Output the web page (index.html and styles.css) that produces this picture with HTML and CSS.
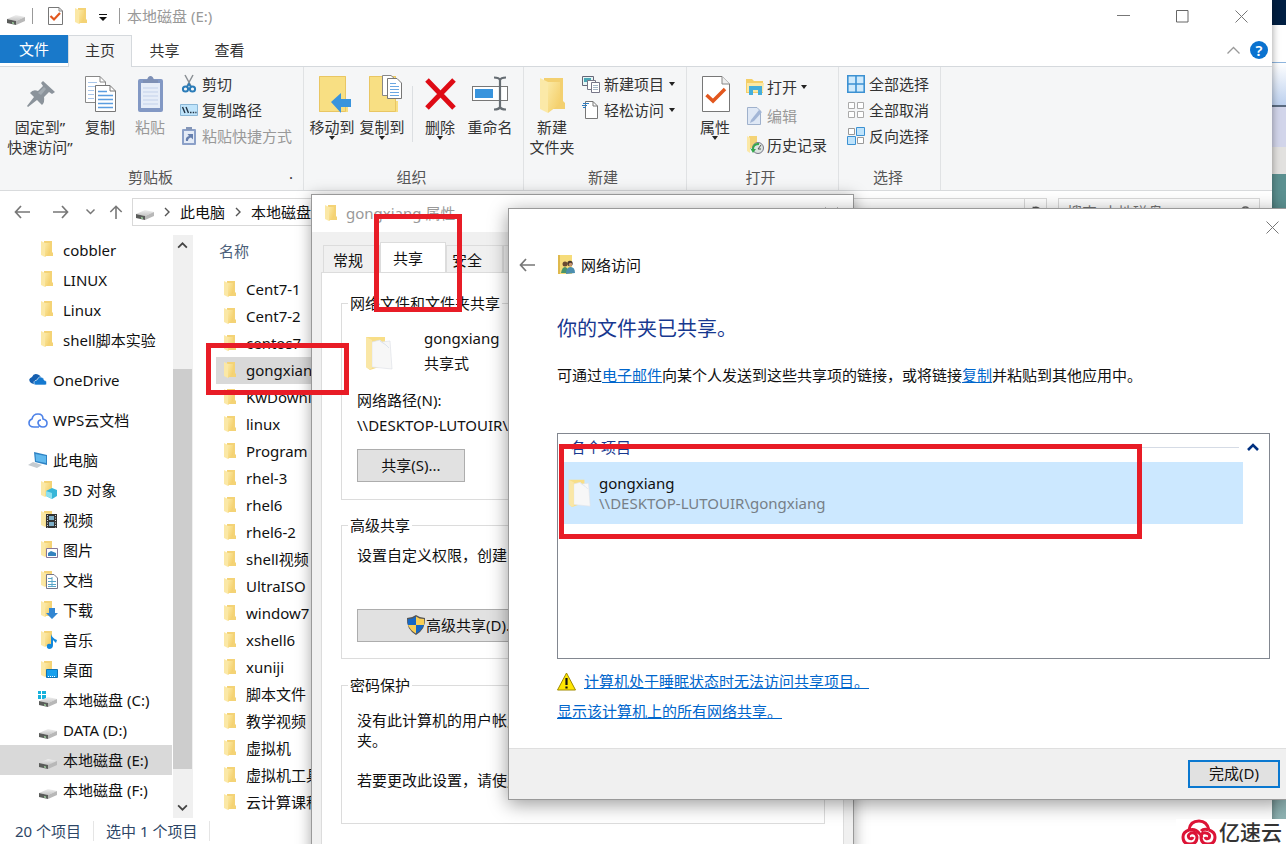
FILE: index.html
```html
<!DOCTYPE html>
<html lang="zh-CN">
<head>
<meta charset="utf-8">
<title>本地磁盘 (E:)</title>
<link rel="stylesheet" href="styles.css">
</head>
<body>
<svg class="defs" aria-hidden="true">
  <defs>
    <linearGradient id="gold" x1="0" x2="1" y1="0" y2="1"><stop offset="0" stop-color="#fbe9a4"/><stop offset="1" stop-color="#f3cb62"/></linearGradient>
    <linearGradient id="steel" x1="0" x2="0" y1="0" y2="1"><stop offset="0" stop-color="#f0f0f0"/><stop offset="1" stop-color="#c4c4c4"/></linearGradient>
  </defs>
  <symbol id="folder" viewBox="0 0 12 16"><path d="M3 0H11V11L12 12V15H3Z" fill="#f4d376"/><path d="M0 0L4 2V16L0 14Z" fill="#fbe8a6"/><path d="M4 2H9V12L4 16Z" fill="url(#gold)"/></symbol>
  <symbol id="drive" viewBox="0 0 18 12"><path d="M0 6L9 2L18 4L9 8Z" fill="url(#steel)"/><path d="M0 6L9 8V12L0 10Z" fill="#5a5c5a"/><path d="M9 8L18 4V8L9 12Z" fill="#b8b8b8"/><path d="M5 9L7 9.500V11L5 10.500Z" fill="#9acb9a"/></symbol>
  <symbol id="check-doc" viewBox="0 0 28 36"><path d="M.5.500H20L27.500 8V35.500H.5Z" fill="#fff" stroke="#777"/><path d="M20 .5V8H27.500" fill="#eee" stroke="#888"/><path d="M4.500 19L11 25L23 13" fill="none" stroke="#e2571e" stroke-width="3.500"/></symbol>
  <symbol id="open-folder" viewBox="0 0 28 34"><path d="M1 1H20V29L5 34L1 31Z" fill="#f8de87"/><path d="M7 6L15 4L17 6L25 5L27 33L7 31Z" fill="#f7f7f7" stroke="#e0e3e8" stroke-width=".7"/><path d="M15 5L21 9L24 12" fill="none" stroke="#dce3ed"/><path d="M1 1L7 4V32L5 34L1 31Z" fill="#fae7a6"/></symbol>
  <symbol id="chev-r" viewBox="0 0 6 10"><path d="M1 1L5 5L1 9" fill="none" stroke="#555" stroke-width="1.400"/></symbol>
  <symbol id="caret" viewBox="0 0 6 4"><path d="M0 0H6L3 4Z" fill="#222"/></symbol>
  <symbol id="left" viewBox="0 0 16 14"><path d="M16 7H1.500M7 1L1.500 7L7 13" fill="none" stroke="#777" stroke-width="1.700"/></symbol>
  <symbol id="close" viewBox="0 0 13 13"><path d="M.5.500L12.500 12.500M12.500.5L.5 12.500" stroke="#777" fill="none"/></symbol>
</svg>

<div class="desktop">
  <div class="backdrop"><i class="navy"></i><i class="white"></i><i class="sky"></i><i class="lilac"></i><i class="sand"></i><i class="teal"></i></div>

  <main class="explorer">
    <header class="titlebar">
      <svg class="drive"><use href="#drive"/></svg><span class="bar"></span>
      <svg class="q-check" viewBox="0 0 15 18"><path d="M.5.500H11L14.500 4V17.500H.5Z" fill="#fff" stroke="#777"/><path d="M11 .5V4H14.500" fill="none" stroke="#888"/><path d="M2.500 9L6 12.500L12 6" fill="none" stroke="#e2571e" stroke-width="2.200"/></svg>
      <svg class="folder"><use href="#folder"/></svg>
      <svg class="q-menu" viewBox="0 0 8 7"><path d="M0 0H8V1H0ZM0 3H8L4 7Z" fill="#111"/></svg>
      <span class="bar"></span><span class="title">本地磁盘 (E:)</span>
      <div class="win-controls">
        <button aria-label="最小化"><svg viewBox="0 0 13 13"><path d="M0 5.500H13" stroke="#777"/></svg></button>
        <button aria-label="最大化"><svg viewBox="0 0 13 13"><path d="M.5.500H12V12H.5Z" fill="none" stroke="#666"/></svg></button>
        <button aria-label="关闭"><svg><use href="#close"/></svg></button>
      </div>
    </header>

    <nav class="tabs">
      <button class="file">文件</button><button class="on">主页</button><button>共享</button><button>查看</button>
      <div class="tab-tools">
        <svg class="fold" viewBox="0 0 13 8"><path d="M.5 7.500L6.500 1.500L12.500 7.500" fill="none" stroke="#999" stroke-width="1.300"/></svg>
        <button class="help" aria-label="帮助">?</button>
      </div>
    </nav>

    <section class="ribbon">
      <div class="group clip">
        <div class="tools">
          <button class="big wide"><svg class="art" viewBox="0 0 32 38"><path d="M19 6L31 17L28 19L25 17L20 22Q21 27 18 30L13 25L4 32L3 31L10 22L6 18Q9 14 14 16L19 11L17 8Z" fill="#8b939b"/><path d="M14 18L20 12L22 14L17 20Z" fill="#a3abb2"/></svg><span>固定到”<br>快速访问”</span></button>
          <button class="big"><svg class="art" viewBox="0 0 32 38"><path d="M1.500 1.500H16L21.500 7V27.500H1.500Z" fill="#fff" stroke="#888"/><path d="M16 1.500V7H21.500" fill="none" stroke="#888"/><path d="M4 7.500H13M4 11.500H19M4 15.500H10M4 19.500H10M4 23.500H10" stroke="#a9c6ea"/><path d="M11.500 10.500H26L31.500 16V36.500H11.500Z" fill="#fff" stroke="#777"/><path d="M26 10.500V16H31.500" fill="none" stroke="#777"/><path d="M14 16.500H23M14 20.500H29M14 24.500H29M14 28.500H29M14 32.500H29" stroke="#5b9de0" stroke-width="1.300"/></svg><span>复制</span></button>
          <button class="big off"><svg class="art" viewBox="0 0 32 38"><rect x="4" y="4" width="25" height="33" rx="2" fill="#8298c4"/><rect x="7" y="8" width="19" height="25" fill="#e6edf8"/><path d="M9 8V5H13Q14 1 16.500 1Q19 1 20 5H24V8Z" fill="#7e90b5"/><path d="M9 13H24M9 17H24M9 21H24M9 25H24M9 29H24" stroke="#c3d1ea"/></svg><span>粘贴</span></button>
          <ul class="small">
            <li><button><svg viewBox="0 0 18 18"><path d="M5 0L11 11M13 0L7 11" stroke="#8a8f94" stroke-width="1.500"/><circle cx="5.500" cy="14" r="2.600" fill="none" stroke="#2b7cb8" stroke-width="2"/><circle cx="12.500" cy="14" r="2.600" fill="none" stroke="#2b7cb8" stroke-width="2"/><path d="M7 12L9 9L11 12" stroke="#2b7cb8" stroke-width="1.600" fill="none"/></svg>剪切</button></li>
            <li><button><svg viewBox="0 0 18 18"><path d="M.5 3.500H17.500V14.500H.5Z" fill="#bfe4fb" stroke="#8ab6d6"/><path d="M2.500 6L5 12M6 6L8.500 12M10 11.500H11.500M12.700 11.500H14.200M15.300 11.500H16.500" stroke="#234" stroke-width="1.400"/></svg>复制路径</button></li>
            <li><button class="off"><svg viewBox="0 0 18 18"><rect x="2" y="2" width="14" height="16" rx="1" fill="#8ba0c8"/><rect x="4" y="4" width="10" height="12" fill="#e4ebf6"/><path d="M6 0H12V3H6Z" fill="#8496b8"/><path d="M6 14Q5 10 9 9L7.500 7H13V12.500L11 10.500Q8 11 8 14Z" fill="#667fae"/></svg>粘贴快捷方式</button></li>
          </ul>
        </div>
        <h2>剪贴板</h2><span class="launcher">.</span>
      </div>

      <div class="group org">
        <div class="tools">
          <button class="big"><svg class="art" viewBox="-3 0 32 38"><path d="M0 1H27V26H29V37H0Z" fill="#f8df83"/><path d="M.5 1.500H26.500V36.500H.5Z" fill="none" stroke="#e9c663"/><path d="M12 27L22 18V24H32V32H22V38Z" fill="#3994dd"/></svg><span>移动到</span><svg class="caret"><use href="#caret"/></svg></button>
          <button class="big"><svg class="art" viewBox="0 0 32 38"><path d="M3 1H30V26H32V37H3Z" fill="#f8df83"/><path d="M3.500 1.500H29.500V36.500H3.500Z" fill="none" stroke="#e9c663"/><path d="M16.500.500H25L29 4V20.500H16.500Z" fill="#fff" stroke="#888"/><path d="M21.500 3.500H31L35.500 8V23.500H21.500Z" fill="#fff" stroke="#777"/><path d="M24 8.500H30M24 11.500H33M24 14.500H33M24 17.500H33M24 20.500H33" stroke="#6ba7e2"/></svg><span>复制到</span><svg class="caret"><use href="#caret"/></svg></button>
          <span class="split"></span>
          <button class="big"><svg class="art" viewBox="0 0 32 38"><path d="M3 5L30 33M30 5L3 33" stroke="#de0b15" stroke-width="5"/></svg><span>删除</span><svg class="caret"><use href="#caret"/></svg></button>
          <button class="big"><svg class="art name-art" viewBox="0 0 36 38"><rect x=".5" y="11.500" width="35" height="14" fill="#fff" stroke="#777"/><rect x="3" y="14" width="18" height="9" fill="#3994dd"/><path d="M22 2.500Q27 2.500 28 5Q29 2.500 34 2.500M28 5V32M22 34.500Q27 34.500 28 32Q29 34.500 34 34.500" fill="none" stroke="#666d73" stroke-width="2.200"/></svg><span>重命名</span></button>
        </div>
        <h2>组织</h2>
      </div>

      <div class="group new">
        <div class="tools">
          <button class="big"><svg class="art" viewBox="0 0 32 38"><path d="M8 3H27V26L29 28V34H8Z" fill="#f3d070"/><path d="M4 3L12 7V38L4 34Z" fill="#fbe9a8"/><path d="M12 7H24V29L12 38Z" fill="url(#gold)"/></svg><span>新建<br>文件夹</span></button>
          <ul class="small">
            <li><button><svg viewBox="0 0 18 18"><path d="M.5 1.500H11.500V10.500H.5Z" fill="#e5f5f5" stroke="#667"/><path d="M2 5H9" stroke="#4aa7b5" stroke-width="4"/><path d="M5.500 5.500H13.500V14.500H5.500Z" fill="#fff" stroke="#778"/><path d="M9.500 7.500H17.500V17.500H9.500Z" fill="#fff" stroke="#778"/><path d="M11 10.500H16M11 12.500H16M11 14.500H16" stroke="#a3b4c4"/></svg>新建项目<svg class="caret"><use href="#caret"/></svg></button></li>
            <li><button><svg viewBox="0 0 18 18"><path d="M3.500.500H11L15.500 5V17.500H3.500Z" fill="#fff" stroke="#777"/><path d="M11 .5V5H15.500" fill="none" stroke="#777"/><path d="M1 2.500H7M0 4.500H5M1 6.500H4" stroke="#2c7bbf" stroke-width="1.200"/></svg>轻松访问<svg class="caret"><use href="#caret"/></svg></button></li>
          </ul>
        </div>
        <h2>新建</h2>
      </div>

      <div class="group open">
        <div class="tools">
          <button class="big"><svg class="art" viewBox="-3 -1 32 38"><use href="#check-doc" width="28" height="36"/></svg><span>属性</span><svg class="caret"><use href="#caret"/></svg></button>
          <ul class="small tall">
            <li><button><svg viewBox="0 0 18 18"><path d="M0 1H6L8 3H17V15H0Z" fill="#f5cf67"/><path d="M1 5H18L17 14H1Z" fill="#fce9a4"/><path d="M3 17V8H16V17H12V12H7V17Z" fill="#45aedb"/></svg>打开<svg class="caret"><use href="#caret"/></svg></button></li>
            <li><button class="off"><svg viewBox="0 0 18 18"><path d="M1.500.500H11L14.500 4V17.500H1.500Z" fill="#dfe8f5" stroke="#9fb1cc"/><path d="M5 13L13 3L16 5L8 14L4 16Z" fill="#a3b6d6"/></svg>编辑</button></li>
            <li><button><svg viewBox="0 0 18 18"><path d="M3 0H11V12H3Z" fill="#f4d376"/><path d="M1 0L4 2V17L1 15Z" fill="#fbe8a6"/><circle cx="12" cy="12" r="5.500" fill="#dce4e0" stroke="#778"/><path d="M12 13L15 9M12 13H15" stroke="#555" fill="none"/><path d="M13 7Q7 6 6 13L4 12L7 17L10 13H8Q8 9 13 9Z" fill="#35a64c"/></svg>历史记录</button></li>
          </ul>
        </div>
        <h2>打开</h2>
      </div>

      <div class="group select">
        <div class="tools">
          <ul class="small">
            <li><button><svg viewBox="0 0 18 18"><path d="M.8.800H17.200V17.200H.8ZM9 1V17M1 9H17" fill="#cfeafc" stroke="#3c91d2" stroke-width="1.600"/></svg>全部选择</button></li>
            <li><button><svg viewBox="0 0 18 18"><path d="M1.500 1.500H7.500V7.500H1.500ZM10.500 1.500H16.500V7.500H10.500ZM1.500 10.500H7.500V16.500H1.500ZM10.500 10.500H16.500V16.500H10.500Z" fill="#fff" stroke="#aaa"/></svg>全部取消</button></li>
            <li><button><svg viewBox="0 0 18 18"><path d="M1.500 1.500H7.500V7.500H1.500ZM10.500 10.500H16.500V16.500H10.500Z" fill="#fff" stroke="#999"/><path d="M9.500.500H17.500V8.500H9.500ZM.5 9.500H8.500V17.500H.5Z" fill="#bfe3fb" stroke="#3c91d2"/></svg>反向选择</button></li>
          </ul>
        </div>
        <h2>选择</h2>
      </div>
    </section>

    <section class="address">
      <svg class="arrow"><use href="#left"/></svg>
      <svg class="arrow fwd" viewBox="0 0 16 14"><path d="M0 7H14.500M9 1L14.500 7L9 13" fill="none" stroke="#777" stroke-width="1.700"/></svg>
      <svg class="down" viewBox="0 0 9 6"><path d="M.5.500L4.500 4.500L8.500.5" fill="none" stroke="#777" stroke-width="1.500"/></svg>
      <svg class="arrow" viewBox="0 0 16 16"><path d="M8 16V1.500M1.500 8L8 1.500L14.500 8" fill="none" stroke="#777" stroke-width="1.800"/></svg>
      <div class="path">
        <svg class="drive"><use href="#drive"/></svg><svg class="chev"><use href="#chev-r"/></svg><a href="#pc">此电脑</a><svg class="chev"><use href="#chev-r"/></svg><a href="#e">本地磁盘 (E:)</a>
        <button class="refresh" aria-label="刷新"><svg viewBox="0 0 14 14"><path d="M11 3A5.500 5.500 0 1 0 12.500 8M3 1.500H7V5" fill="none" stroke="#555" stroke-width="1.500"/></svg></button>
      </div>
      <div class="search"><input type="search" aria-label="搜索" placeholder="搜索&quot;本地磁盘 (E:)&quot;"><svg viewBox="0 0 14 14"><circle cx="8" cy="5.500" r="4.500" fill="none" stroke="#666" stroke-width="1.500"/><path d="M5 9L1 13" stroke="#666" stroke-width="1.500"/></svg></div>
    </section>

    <section class="body">
      <nav class="tree">
        <a href="#n1"><svg class="ico"><use href="#folder" width="12" height="16"/></svg>cobbler</a>
        <a href="#n2"><svg class="ico"><use href="#folder" width="12" height="16"/></svg>LINUX</a>
        <a href="#n3"><svg class="ico"><use href="#folder" width="12" height="16"/></svg>Linux</a>
        <a href="#n4"><svg class="ico"><use href="#folder" width="12" height="16"/></svg>shell脚本实验</a>
        <a class="root" href="#n5"><svg class="ico" viewBox="0 0 20 18"><path d="M3 12Q-1 8 4 6Q6 1 11 4Q13 5 13 7L8 14Z" fill="#155fb0"/><path d="M7 14Q4 10 9 9Q11 4 15 7Q16 7 16 9Q20 10 18 14Z" fill="#1479d0" stroke="#fff" stroke-width=".6"/></svg>OneDrive</a>
        <a class="root" href="#n6"><svg class="ico" viewBox="0 0 20 18"><path d="M6 16Q1 16 1 12Q1 9 4 8Q5 3 10 3Q15 3 15 8Q19 9 19 12Q19 16 15 16Q11 16 10 12Q10 9 13 9M6 16H11" fill="none" stroke="#4d82e8" stroke-width="1.600"/></svg>WPS云文档</a>
        <a class="root" href="#n7"><svg class="ico" viewBox="0 0 20 18"><path d="M6 1L19 4V14L7 11Z" fill="#2f83c4"/><path d="M7.500 3L18 5V12L8 10Z" fill="#61b9ee"/><path d="M0 14L5 11L14 14L9 17Z" fill="#c5cbd0"/></svg>此电脑</a>
        <a href="#n8"><svg class="ico" viewBox="0 0 17 18"><use href="#folder" width="12" height="16"/><path d="M5 10L11 7L16 9V15L11 18L5 15Z" fill="#38b6d8"/><path d="M5 10L11 12V18L5 15Z" fill="#8de0ef"/></svg>3D 对象</a>
        <a href="#n9"><svg class="ico" viewBox="0 0 17 18"><use href="#folder" width="12" height="16"/><rect x="5" y="3" width="11" height="14" fill="#333"/><path d="M8 5H13V9H8ZM8 11H13V15H8Z" fill="#7eb0c9"/><path d="M6.500 4V17M14.500 4V17" stroke="#ddd" stroke-dasharray="1 1.500"/></svg>视频</a>
        <a href="#n10"><svg class="ico" viewBox="0 0 17 18"><use href="#folder" width="12" height="16"/><path d="M5.500 7.500H16.500V16.500H5.500Z" fill="#fff" stroke="#879"/><path d="M7 12L10 10L15 12V15H7Z" fill="#3583bf"/></svg>图片</a>
        <a href="#n11"><svg class="ico" viewBox="0 0 17 18"><use href="#folder" width="12" height="16"/><path d="M5.500 3.500H13L16.500 7V17.500H5.500Z" fill="#fff" stroke="#778"/><path d="M7 7.500H11M7 10.500H15M7 13.500H15M7 15.500H15M11 6V15" stroke="#59a5c8"/></svg>文档</a>
        <a href="#n12"><svg class="ico" viewBox="0 0 17 18"><use href="#folder" width="12" height="16"/><path d="M8 7H14V12H17L11 18L5 12H8Z" fill="#3286d2"/></svg>下载</a>
        <a href="#n13"><svg class="ico" viewBox="0 0 17 18"><use href="#folder" width="12" height="16"/><path d="M10 3Q11 7 16 9L15 12L12 9V14Q12 18 8 18Q5 17 6 14Q7 12 10 13Z" fill="#1388dc"/></svg>音乐</a>
        <a href="#n14"><svg class="ico" viewBox="0 0 17 18"><use href="#folder" width="12" height="16"/><path d="M5.500 8.500H16.500V16.500H5.500Z" fill="#16a0ee" stroke="#1273b3"/><path d="M7 15.500H15" stroke="#fff" stroke-dasharray="1 1"/></svg>桌面</a>
        <a href="#c"><svg class="ico disk" viewBox="0 0 20 18"><path d="M0 0H3V3H0ZM4 0H8V3H4ZM0 4H3V8H0ZM4 4H8V8H4Z" fill="#16b1dc"/><use href="#drive" x="1" y="4" width="18" height="12"/></svg>本地磁盘 (C:)</a>
        <a href="#d"><svg class="ico disk" viewBox="0 0 20 18"><use href="#drive" x="1" y="6" width="18" height="12"/></svg>DATA (D:)</a>
        <a class="sel" href="#e"><svg class="ico disk" viewBox="0 0 20 18"><use href="#drive" x="1" y="6" width="18" height="12"/></svg>本地磁盘 (E:)</a>
        <a href="#f"><svg class="ico disk" viewBox="0 0 20 18"><use href="#drive" x="1" y="6" width="18" height="12"/></svg>本地磁盘 (F:)</a>
      </nav>
      <div class="scroll">
        <svg viewBox="0 0 12 8"><path d="M1 6.500L6 1.500L11 6.500" fill="none" stroke="#444" stroke-width="2"/></svg>
        <span class="thumb"></span>
        <svg class="end" viewBox="0 0 12 8"><path d="M1 1.500L6 6.500L11 1.500" fill="none" stroke="#444" stroke-width="2"/></svg>
      </div>
      <table class="files">
        <thead><tr><th>名称</th></tr></thead>
        <tbody>
          <tr><td><svg class="folder"><use href="#folder"/></svg>Cent7-1</td></tr>
          <tr><td><svg class="folder"><use href="#folder"/></svg>Cent7-2</td></tr>
          <tr><td><svg class="folder"><use href="#folder"/></svg>centos7</td></tr>
          <tr class="sel"><td><svg class="folder"><use href="#folder"/></svg>gongxiang</td></tr>
          <tr><td><svg class="folder"><use href="#folder"/></svg>KwDownload</td></tr>
          <tr><td><svg class="folder"><use href="#folder"/></svg>linux</td></tr>
          <tr><td><svg class="folder"><use href="#folder"/></svg>Program</td></tr>
          <tr><td><svg class="folder"><use href="#folder"/></svg>rhel-3</td></tr>
          <tr><td><svg class="folder"><use href="#folder"/></svg>rhel6</td></tr>
          <tr><td><svg class="folder"><use href="#folder"/></svg>rhel6-2</td></tr>
          <tr><td><svg class="folder"><use href="#folder"/></svg>shell视频</td></tr>
          <tr><td><svg class="folder"><use href="#folder"/></svg>UltraISO</td></tr>
          <tr><td><svg class="folder"><use href="#folder"/></svg>window7</td></tr>
          <tr><td><svg class="folder"><use href="#folder"/></svg>xshell6</td></tr>
          <tr><td><svg class="folder"><use href="#folder"/></svg>xuniji</td></tr>
          <tr><td><svg class="folder"><use href="#folder"/></svg>脚本文件</td></tr>
          <tr><td><svg class="folder"><use href="#folder"/></svg>教学视频</td></tr>
          <tr><td><svg class="folder"><use href="#folder"/></svg>虚拟机</td></tr>
          <tr><td><svg class="folder"><use href="#folder"/></svg>虚拟机工具</td></tr>
          <tr><td><svg class="folder"><use href="#folder"/></svg>云计算课程</td></tr>
        </tbody>
      </table>
    </section>
    <footer class="status"><span>20 个项目</span><span>选中 1 个项目</span></footer>
  </main>

  <section class="props">
    <header><svg class="folder"><use href="#folder"/></svg><span>gongxiang 属性</span><svg class="x"><use href="#close"/></svg></header>
    <div class="prop-tabs"><button>常规</button><button class="on">共享</button><button>安全</button><button>自定义</button></div>
    <div class="page">
      <fieldset class="f1">
        <legend>网络文件和文件夹共享</legend>
        <div class="share"><svg class="paper-folder"><use href="#open-folder"/></svg><p>gongxiang<br>共享式</p></div>
        <p class="net">网络路径(N):<br>\\DESKTOP-LUTOUIR\gongxiang</p>
        <button class="btn">共享(S)...</button>
      </fieldset>
      <fieldset class="f2">
        <legend>高级共享</legend>
        <p>设置自定义权限，创建多个共享，并设置其他高级共享选项。</p>
        <button class="btn adv"><svg viewBox="0 0 20 20"><path d="M10 0Q14 3 19 3Q20 14 10 20Q0 14 1 3Q6 3 10 0Z" fill="#555"/><path d="M10 1.500V10H2Q1.500 7 2 4Q7 4 10 1.500Z" fill="#1768c4"/><path d="M10 1.500Q13 4 18 4Q18.500 7 18 10H10Z" fill="#f9ce55"/><path d="M2 10H10V18.500Q4 15 2 10Z" fill="#f9ce55"/><path d="M10 10H18Q16 15 10 18.500Z" fill="#1768c4"/></svg>高级共享(D)...</button>
      </fieldset>
      <fieldset class="f3">
        <legend>密码保护</legend>
        <p>没有此计算机的用户帐户和密码的用户可以访问与每个人共享的文件夹。</p>
        <p>若要更改此设置，请使用网络和共享中心。</p>
      </fieldset>
    </div>
  </section>

  <section class="wizard">
    <button class="x" aria-label="关闭"><svg><use href="#close"/></svg></button>
    <header><button aria-label="返回"><svg class="arrow"><use href="#left"/></svg></button>
      <svg class="people" viewBox="0 0 17 20"><path d="M0 0H14V19H0Z" fill="#f6dc7a"/><path d="M0 0H2V19H0Z" fill="#dfb94d"/><circle cx="7" cy="9" r="2.500" fill="#6a4b32"/><circle cx="12" cy="8.500" r="2.700" fill="#4a3a30"/><circle cx="12.500" cy="9.500" r="1.700" fill="#c99470"/><path d="M3 18Q4 12 7 12Q10 12 10 18Z" fill="#4b9469"/><path d="M8 19Q8 12 12.500 12Q17 12 17 18Z" fill="#4c8eae"/></svg><span>网络访问</span></header>
    <div class="content">
      <h1>你的文件夹已共享。</h1>
      <p>可通过<a href="#mail">电子邮件</a>向某个人发送到这些共享项的链接，或将链接<a href="#copy">复制</a>并粘贴到其他应用中。</p>
      <div class="list">
        <div class="list-head"><span>各个项目</span><i></i><svg viewBox="0 0 12 8"><path d="M1 7L6 2L11 7" fill="none" stroke="#003080" stroke-width="2.600"/></svg></div>
        <div class="item"><svg><use href="#open-folder"/></svg><div>gongxiang<br><small>\\DESKTOP-LUTOUIR\gongxiang</small></div></div>
      </div>
      <div class="links"><svg viewBox="0 0 19 19"><path d="M9.500 1L18.500 18H.5Z" fill="#ffe600" stroke="#a08a00" stroke-linejoin="round"/><path d="M9.500 6V13M9.500 14.500V16.500" stroke="#111" stroke-width="2.200"/></svg><a href="#sleep">计算机处于睡眠状态时无法访问共享项目。</a></div>
      <div class="links"><a href="#all">显示该计算机上的所有网络共享。</a></div>
    </div>
    <footer><button>完成(D)</button></footer>
  </section>

  <div class="mark m-tab"></div><div class="mark m-file"></div><div class="mark m-item"></div>
  <div class="brand"><svg viewBox="0 0 36 26"><path d="M8 11Q9 2 18 2Q26 2 28 11M8 11Q2 13 2 18Q2 25 9 25Q16 25 16 18Q15 13 10 14Q6 16 8 19Q11 21 12 18M28 11Q34 13 34 18Q34 25 27 25Q20 25 20 18Q20 13 25 14Q30 15 28 19Q25 21 24 18M8 11Q14 9 18 14Q22 18 20 18M28 11Q23 9 20 12" fill="none" stroke="#dc1436" stroke-width="3"/></svg><span>亿速云</span></div>
</div>
</body>
</html>
```

FILE: styles.css
```css
* { box-sizing: border-box; }
body { margin: 0; font: 15px/20px "Noto Sans", "Noto Sans CJK SC", sans-serif; color: #111; }
button { font: inherit; color: inherit; background: none; border: 0; padding: 0; white-space: nowrap; }
h1, h2, p, ul { margin: 0; padding: 0; font-weight: 400; }
ul { list-style: none; }
a { color: #0066cc; }
svg { display: block; flex: none; overflow: visible; }
.defs { position: absolute; width: 0; height: 0; }
.desktop { position: relative; height: 100vh; min-height: 600px; overflow: hidden; background: #fff; }
.drive { width: 18px; height: 12px; }
.folder { width: 12px; height: 16px; }
.arrow { width: 16px; height: 14px; }
.caret { width: 6px; height: 4px; }

.backdrop { position: absolute; top: 0; right: 0; bottom: 24px; width: 24px; display: flex; flex-direction: column; }
.backdrop .navy { height: 25px; background: #001f42; }
.backdrop .white { height: 37px; background: #fff; }
.backdrop .sky { height: 45px; background: linear-gradient(#fff, #bcd0ee); border-top: 1px solid #8db4dd; border-bottom: 2px solid #5b6b80; }
.backdrop .lilac { height: 40px; background: #d2d5ea; }
.backdrop .sand { height: 27px; background: #e2e1df; }
.backdrop .teal { flex: 1; background: linear-gradient(#5b9090 10%, #8fb3b3); }

.explorer { position: absolute; inset: 0 14px 0 0; background: #fff; display: flex; flex-direction: column; box-shadow: 0 0 8px rgba(0, 0, 0, .4); }
.titlebar { height: 35px; flex: none; display: flex; align-items: center; padding: 0 24px 3px 7px; }
.titlebar .drive { margin-top: 5px; }
.bar { width: 1px; height: 16px; background: #999; margin: 0 7px; }
.q-check { width: 15px; height: 18px; margin: 0 12px 0 8px; }
.q-menu { width: 8px; height: 7px; margin: 2px 5px 0 12px; }
.title { color: #999; }
.win-controls { margin-left: auto; display: flex; gap: 46px; }
.win-controls svg { width: 13px; height: 13px; }

.tabs { height: 32px; flex: none; display: flex; border-bottom: 1px solid #d5d9dd; color: #333; }
.tabs > button { width: 65px; height: 31px; padding-bottom: 2px; }
.tabs > .file { width: 68px; height: 28px; padding-bottom: 0; background: #1979ca; color: #fff; }
.tabs > .on { width: 64px; height: 32px; padding-bottom: 3px; background: #f5f6f7; border: 1px solid #d5d9dd; border-bottom: 0; }
.tab-tools { margin-left: auto; padding: 0 4px 2px; display: flex; align-items: center; gap: 10px; }
.fold { width: 13px; height: 8px; }
.tabs .help { width: 18px; height: 18px; padding: 0; border-radius: 50%; background: #0a72cf; color: #fff; font-weight: 600; line-height: 18px; }

.ribbon { height: 124px; flex: none; display: flex; background: #f5f6f7; border-bottom: 1px solid #d9dbdd; color: #333; }
.group { position: relative; display: flex; flex-direction: column; justify-content: space-between; padding: 7px 3px 3px; border-right: 1px solid #e0e2e4; }
.group h2 { font-size: 15px; line-height: 20px; text-align: center; color: #555; padding-right: 4px; }
.clip { width: 304px; padding-left: 5px; }
.org { width: 220px; }
.new { width: 163px; }
.open { width: 152px; }
.select { width: 102px; padding-left: 8px; }
.select h2 { padding-right: 8px; }
.tools { display: flex; }
.big { width: 50px; display: flex; flex-direction: column; align-items: center; }
.big.wide { width: 70px; }
.big .art { width: 32px; height: 38px; margin: 1px 0 4px; }
.big .name-art { width: 36px; }
.big .caret { margin-top: -1px; }
.off { color: #999; }
.small { margin-top: -3px; padding-left: 5px; }
.small button { height: 26px; display: flex; align-items: center; gap: 4px; }
.small svg { width: 18px; height: 18px; }
.small .caret { width: 6px; height: 4px; margin-left: 1px; }
.small.tall { padding: 1px 0 0 6px; }
.tall button { height: 29px; gap: 3px; }
.select .small { padding-left: 0; }
.split { width: 1px; height: 56px; background: #dcdfe2; margin: 12px 2px 0 5px; }
.launcher { position: absolute; right: 10px; bottom: 7px; }

.address { flex: none; height: 44px; display: flex; align-items: center; padding: 0 12px 2px 14px; }
.address .fwd { margin: 0 17px 0 23px; }
.down { width: 9px; height: 6px; margin-right: 13px; }
.path { flex: 1; height: 28px; margin: 0 11px 0 8px; border: 1px solid #d9d9d9; display: flex; align-items: center; padding-left: 3px; }
.path a { color: #111; text-decoration: none; padding-bottom: 1px; }
.path .drive { margin-top: 4px; }
.path .chev { width: 6px; height: 10px; margin: 0 10px; }
.refresh { width: 22px; height: 26px; margin-left: auto; border-left: 1px solid #d9d9d9; display: grid; place-items: center; }
.refresh svg { width: 12px; height: 12px; }
.search { width: 202px; height: 28px; border: 1px solid #d9d9d9; display: flex; align-items: center; padding: 0 8px; }
.search input { font: inherit; border: 0; outline: 0; flex: 1; width: 100%; padding: 0; background: none; }
.search svg { width: 13px; height: 13px; }

.body { flex: 1; min-height: 0; display: flex; overflow: hidden; }
.tree { width: 173px; flex: none; overflow: hidden; }
.tree a { height: 30px; display: flex; align-items: center; padding-left: 41px; gap: 5px; color: #111; text-decoration: none; white-space: nowrap; }
.tree .root { margin-top: 10px; padding-left: 28px; }
.tree .ico { width: 17px; height: 18px; }
.tree .root .ico { width: 20px; }
.tree .disk { width: 20px; margin-left: -3px; }
.tree .sel { background: #d9d9d9; margin-right: 1px; }
.scroll { width: 20px; flex: none; background: #f0f0f0; display: flex; flex-direction: column; align-items: center; padding: 7px 1px 7px 0; }
.scroll svg { width: 11px; height: 7px; }
.scroll .end { margin-top: auto; }
.thumb { width: 19px; height: 400px; margin-top: 120px; background: #cdcdcd; }
.files { width: 330px; margin-left: 23px; border-collapse: collapse; align-self: flex-start; }
.files th { height: 41px; padding: 0 3px 10px; text-align: left; font-weight: 400; color: #4c607a; }
.files td { height: 27px; padding: 0 8px 2px; white-space: nowrap; }
.files .folder { display: inline-block; vertical-align: middle; margin: -3px 10px 0 0; }
.files .sel { background: #d9d9d9; }
.status { flex: none; height: 26px; display: flex; align-items: center; padding-left: 15px; color: #2d4666; }
.status span { padding-right: 12px; margin-right: 12px; border-right: 1px solid #e5e5e5; }

.props { position: absolute; left: 311px; top: 194px; bottom: -40px; width: 543px; padding: 0 9px; background: #f0f0f0; border: 1px solid #999; box-shadow: 0 2px 14px rgba(0, 0, 0, .35); display: flex; flex-direction: column; }
.props header { height: 37px; flex: none; margin: 0 -9px; padding: 0 15px 1px 13px; display: flex; align-items: center; gap: 9px; background: #fff; color: #999; }
.props header .x { width: 13px; height: 13px; margin-left: auto; }
.prop-tabs { display: flex; align-items: flex-end; height: 40px; padding-left: 2px; flex: none; }
.prop-tabs button { width: 57px; height: 27px; border: 1px solid #dcdcdc; border-bottom: 0; padding: 2px 5px 0; text-align: left; }
.prop-tabs button:first-child { padding-left: 9px; }
.prop-tabs .on { width: 66px; height: 31px; margin-bottom: -1px; padding: 0 12px; background: #fff; }
.page { flex: 1; background: #fff; border: 1px solid #dcdcdc; padding: 20px 18px 0 19px; }
fieldset { margin: 0; border: 1px solid #dcdcdc; padding: 0 16px 0 15px; min-width: 0; }
legend { padding: 0 2px; margin-left: -9px; line-height: 20px; }
.f1 { height: 207px; }
.f2 { height: 144px; margin-top: 15px; }
.f3 { height: 149px; margin-top: 16px; }
.share { display: flex; gap: 31px; padding: 13px 0 0 8px; line-height: 25px; }
.paper-folder { width: 28px; height: 34px; margin-top: 10px; }
.net { margin-top: 12px; line-height: 25px; }
.btn { min-width: 108px; height: 33px; padding-bottom: 2px; background: #e1e1e1; border: 1px solid #adadad; }
.f1 .btn { margin-top: 11px; }
.f2 p { padding-top: 10px; }
.adv { width: 210px; margin-top: 44px; display: flex; align-items: center; justify-content: center; }
.adv svg { width: 20px; height: 20px; }
.f3 p { padding-top: 15px; }
.f3 p + p { padding-top: 20px; }

.wizard { position: absolute; left: 508px; right: 0; top: 208px; height: 592px; background: #fff; border: 1px solid #999; border-right: 0; box-shadow: 0 4px 18px rgba(0, 0, 0, .4); display: flex; flex-direction: column; }
.wizard > .x { display: flex; align-items: flex-start; align-self: flex-end; padding: 12px 7px 0; height: 35px; }
.wizard > .x svg { width: 13px; height: 13px; }
.wizard header { display: flex; align-items: center; height: 41px; padding-left: 10px; }
.people { width: 17px; height: 20px; margin: 0 6px 0 23px; }
.content { flex: 1; padding: 32px 16px 0 48px; }
.content h1 { font-size: 20px; line-height: 24px; color: #17388f; }
.content p { margin-top: 24px; }
.list { margin: 48px 0 12px; height: 226px; border: 1px solid #828790; padding: 3px 10px 0 5px; }
.list-head { display: flex; align-items: center; gap: 8px; padding-left: 8px; color: #17388f; height: 20px; }
.list-head i { flex: 1; height: 1px; background: #d5dbe5; }
.list-head svg { width: 12px; height: 8px; }
.item { margin: 5px 16px 0 0; height: 62px; display: flex; align-items: center; gap: 8px; padding-left: 5px; background: #cce8ff; }
.item svg { width: 23px; height: 28px; }
.item small { font-size: 15px; color: #777f87; }
.links { display: flex; align-items: center; gap: 8px; height: 20px; margin-bottom: 10px; }
.links svg { width: 19px; height: 19px; }
.wizard footer { height: 51px; display: flex; align-items: center; justify-content: flex-end; padding-right: 6px; background: #f0f0f0; border-top: 1px solid #dfdfdf; }
.wizard footer button { width: 92px; height: 28px; padding-bottom: 2px; background: #e1e1e1; border: 2px solid #0a78d0; }

.mark { position: absolute; border: 5px solid #e81c26; }
.m-tab { left: 374px; top: 214px; width: 88px; height: 98px; }
.m-file { left: 206px; top: 343px; width: 143px; height: 52px; }
.m-item { left: 559px; top: 444px; width: 583px; height: 95px; }
.brand { position: absolute; right: 0; bottom: 0; width: 110px; height: 25px; background: #fff; display: flex; align-items: center; gap: 2px; padding: 0 4px 0 5px; font-size: 21px; line-height: 24px; font-weight: 500; color: #333; white-space: nowrap; }
.brand svg { width: 36px; height: 26px; }
```
